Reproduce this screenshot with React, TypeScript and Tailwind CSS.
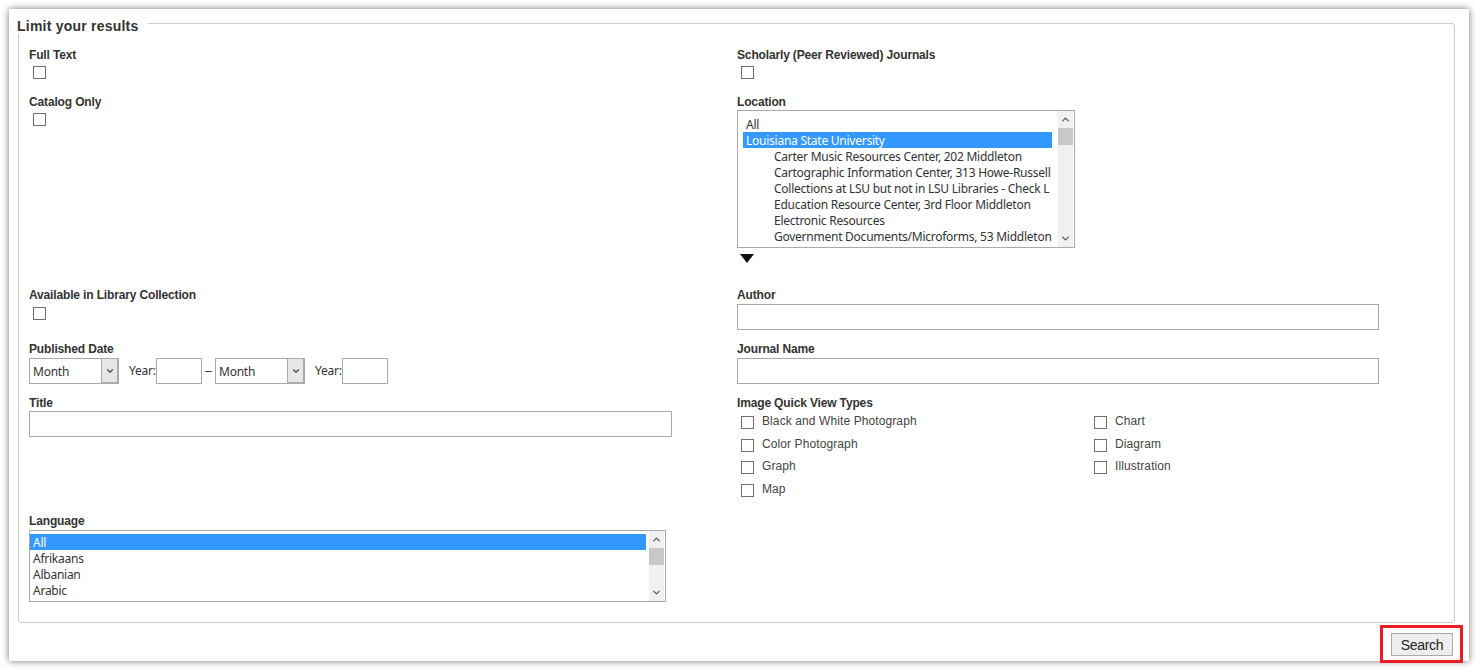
import { ChevronDown, ChevronUp } from "lucide-react";

const locations = [
  { name: "All", indent: false },
  { name: "Louisiana State University", indent: false, selected: true },
  { name: "Carter Music Resources Center, 202 Middleton", indent: true },
  { name: "Cartographic Information Center, 313 Howe-Russell", indent: true },
  { name: "Collections at LSU but not in LSU Libraries - Check L", indent: true },
  { name: "Education Resource Center, 3rd Floor Middleton", indent: true },
  { name: "Electronic Resources", indent: true },
  { name: "Government Documents/Microforms, 53 Middleton", indent: true },
];

const languages = [
  { name: "All", indent: false, selected: true },
  { name: "Afrikaans", indent: false },
  { name: "Albanian", indent: false },
  { name: "Arabic", indent: false },
];

const imageTypes = [
  "Black and White Photograph",
  "Chart",
  "Color Photograph",
  "Diagram",
  "Graph",
  "Illustration",
  "Map",
];

function Label({ children }: { children: string }) {
  return <div className="text-[12px] leading-[14px] font-bold tracking-[-0.15px] text-[#333333]">{children}</div>;
}

function Checkbox({ className }: { className: string }) {
  return (
    <input
      type="checkbox"
      className={`block w-[13px] h-[13px] appearance-none border border-[#707070] bg-white shrink-0 ${className}`}
    />
  );
}

function TextBox({ className }: { className: string }) {
  return <input type="text" className={`block h-[26px] border border-[#aaaaaa] bg-white ${className}`} />;
}

interface ListOption {
  name: string;
  indent: boolean;
  selected?: boolean;
}

function ListBox({
  options,
  className,
  listClass,
  selectedClass,
}: {
  options: ListOption[];
  className: string;
  listClass: string;
  selectedClass: string;
}) {
  return (
    <div className={`flex border border-[#aaaaaa] bg-white font-['Noto_Sans',sans-serif] text-[12px] leading-[18px] tracking-[-0.25px] text-[#333333] ${className}`}>
      <div className={`flex-1 min-w-0 overflow-hidden ${listClass}`}>
        {options.map((o) => (
          <div
            key={o.name}
            className={`h-[16px] whitespace-nowrap ${o.indent ? "pl-[31px]" : "pl-[3px]"} ${o.selected ? `bg-[#3399ff] text-white ${selectedClass}` : ""}`}
          >
            {o.name}
          </div>
        ))}
      </div>
      <div className="w-[15px] mr-[1px] flex flex-col bg-[#f0f0f0] text-[#505050]">
        <div className="h-[17px] flex items-center justify-center">
          <ChevronUp size={11} strokeWidth={2.5} />
        </div>
        <div className="h-[17px] bg-[#c8c8c8]" />
        <div className="flex-1" />
        <div className="h-[17px] flex items-center justify-center">
          <ChevronDown size={11} strokeWidth={2.5} />
        </div>
      </div>
    </div>
  );
}

function MonthSelect() {
  return (
    <div className="flex w-[90px] h-[26px] border border-[#aaaaaa] bg-white">
      <div className="flex-1 pl-[3px] font-['Noto_Sans',sans-serif] text-[12px] leading-[25px] tracking-[-0.25px] text-[#333333]">Month</div>
      <div className="w-[17px] flex items-center justify-center bg-[#e6e6e6] border-l border-[#aaaaaa] border-r border-b text-[#505050]">
        <ChevronDown size={10} strokeWidth={3} />
      </div>
    </div>
  );
}

export default function App() {
  return (
    <div className="h-screen overflow-hidden bg-white pt-[9px] pl-[9px] pr-[8px] font-['Liberation_Sans',Arial,sans-serif]">
      <div className="h-[652px] bg-white pt-[3px] pl-[9px] pr-[14px] shadow-[0_0_7px_rgba(0,0,0,0.55)]">
        <fieldset className="h-[611px] border border-[#cccccc] rounded-[3px] pl-[10px] pt-[14px]">
          <legend className="-ml-[12px] pt-[6px] pr-[10px] text-[14px] leading-[16px] font-bold tracking-[0.22px] text-[#333333]">
            Limit your results
          </legend>
          <div className="grid grid-cols-[708px_1fr] grid-rows-[47px_193px_54px_54px_118px_auto]">
            <div>
              <Label>Full Text</Label>
              <Checkbox className="mt-[4px] ml-[4px]" />
            </div>
            <div>
              <Label>Scholarly (Peer Reviewed) Journals</Label>
              <Checkbox className="mt-[4px] ml-[4px]" />
            </div>

            <div>
              <Label>Catalog Only</Label>
              <Checkbox className="mt-[4px] ml-[4px]" />
            </div>
            <div>
              <Label>Location</Label>
              <ListBox
                options={locations}
                className="mt-[1px] w-[338px] h-[138px]"
                listClass="pl-[5px] pt-[5px]"
                selectedClass="mr-[6px]"
              />
              <svg width="14" height="9" viewBox="0 0 14 9" className="block mt-[6px] ml-[3px]">
                <path d="M0 0H14L7 9Z" fill="#111111" />
              </svg>
            </div>

            <div>
              <Label>Available in Library Collection</Label>
              <Checkbox className="mt-[5px] ml-[4px]" />
            </div>
            <div>
              <Label>Author</Label>
              <TextBox className="mt-[2px] w-[642px]" />
            </div>

            <div>
              <Label>Published Date</Label>
              <div className="mt-[2px] flex items-center text-[12px] text-[#333333]">
                <MonthSelect />
                <span className="ml-[10px] w-[27px] font-['Noto_Sans',sans-serif] tracking-[-0.25px]">Year:</span>
                <TextBox className="w-[46px]" />
                <span className="mx-[3px] w-[7px]">–</span>
                <MonthSelect />
                <span className="ml-[10px] w-[27px] font-['Noto_Sans',sans-serif] tracking-[-0.25px]">Year:</span>
                <TextBox className="w-[46px]" />
              </div>
            </div>
            <div>
              <Label>Journal Name</Label>
              <TextBox className="mt-[2px] w-[642px]" />
            </div>

            <div>
              <Label>Title</Label>
              <TextBox className="mt-[1px] w-[643px]" />
            </div>
            <div>
              <Label>Image Quick View Types</Label>
              <div className="grid grid-cols-[353px_1fr] auto-rows-[22.7px] mt-[6px]">
                {imageTypes.map((t) => (
                  <div key={t} className="flex items-start">
                    <Checkbox className="ml-[4px] mr-[8px]" />
                    <span className="-mt-[2px] text-[12px] leading-[14px] tracking-[0.1px] text-[#444444]">{t}</span>
                  </div>
                ))}
              </div>
            </div>

            <div>
              <Label>Language</Label>
              <ListBox
                options={languages}
                className="mt-[2px] w-[637px] h-[72px]"
                listClass="pt-[3px]"
                selectedClass="mr-[3px]"
              />
            </div>
          </div>
        </fieldset>
        <div className="flex justify-end -mr-[8px] mt-[2px]">
          <div className="border-[3px] border-[#ed1c24] pl-[8px] pr-[7px] pt-[5px] pb-[4px]">
            <button className="block w-[62px] h-[23px] border border-[#aaaaaa] bg-[#eeeeee] text-[14px] leading-[20px] tracking-[-0.3px] text-[#222222]">
              Search
            </button>
          </div>
        </div>
      </div>
    </div>
  );
}
